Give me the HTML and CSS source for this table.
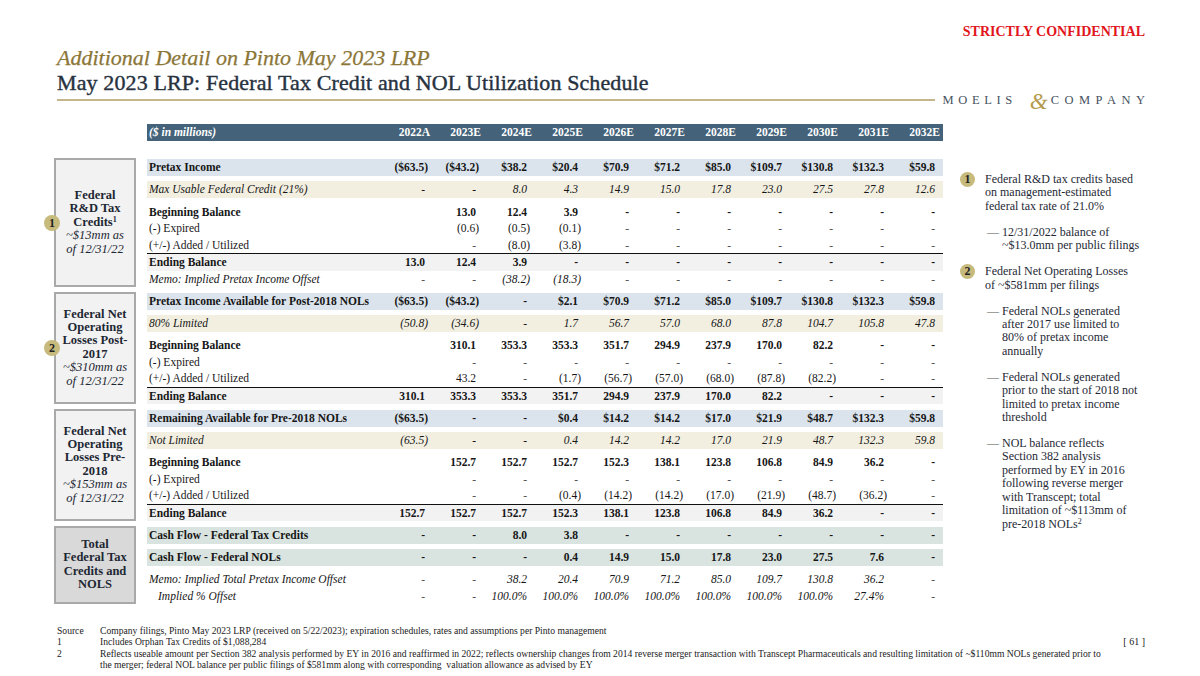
FILE: index.html
```html
<!DOCTYPE html>
<html lang="en">
<head>
<meta charset="utf-8">
<title>Federal Tax Credit and NOL Utilization Schedule</title>
<link rel="stylesheet" href="styles.css">
</head>
<body>
<div class="page">
  <div class="conf">STRICTLY CONFIDENTIAL</div>
  <div class="titles">
    <h1 class="t1">Additional Detail on Pinto May 2023 LRP</h1>
    <h2 class="t2">May 2023 LRP: Federal Tax Credit and NOL Utilization Schedule</h2>
  </div>
  <div class="rule-row">
    <div class="rule"></div>
    <div class="logo"><span class="lw first">MOELIS</span><span class="amp">&amp;</span><span class="lw last">COMPANY</span></div>
  </div>

  <div class="content">
    <div class="schedule">
      <div class="grid head"><span><i>($ in millions)</i></span><span>2022A</span><span>2023E</span><span>2024E</span><span>2025E</span><span>2026E</span><span>2027E</span><span>2028E</span><span>2029E</span><span>2030E</span><span>2031E</span><span>2032E</span></div>

      <!-- Section 1 -->
      <div class="sec sec1">
        <div class="box"><span class="badge">1</span><b>Federal</b><b>R&amp;D Tax</b><b>Credits<sup>1</sup></b><i>~$13mm as</i><i>of 12/31/22</i></div>
        <div class="rows">
          <div class="grid s blue"><span>Pretax Income</span><span class="ng">($63.5)</span><span class="ng">($43.2)</span><span>$38.2</span><span>$20.4</span><span>$70.9</span><span>$71.2</span><span>$85.0</span><span>$109.7</span><span>$130.8</span><span>$132.3</span><span>$59.8</span></div>
          <div class="grid s beige gap"><span>Max Usable Federal Credit (21%)</span><span>-</span><span>-</span><span>8.0</span><span>4.3</span><span>14.9</span><span>15.0</span><span>17.8</span><span>23.0</span><span>27.5</span><span>27.8</span><span>12.6</span></div>
          <div class="grid r bold"><span>Beginning Balance</span><span></span><span>13.0</span><span>12.4</span><span>3.9</span><span>-</span><span>-</span><span>-</span><span>-</span><span>-</span><span>-</span><span>-</span></div>
          <div class="grid r"><span>(-) Expired</span><span></span><span class="ng">(0.6)</span><span class="ng">(0.5)</span><span class="ng">(0.1)</span><span class="dim">-</span><span class="dim">-</span><span class="dim">-</span><span class="dim">-</span><span class="dim">-</span><span class="dim">-</span><span class="dim">-</span></div>
          <div class="grid r"><span>(+/-) Added / Utilized</span><span></span><span class="dim">-</span><span class="ng">(8.0)</span><span class="ng">(3.8)</span><span class="dim">-</span><span class="dim">-</span><span class="dim">-</span><span class="dim">-</span><span class="dim">-</span><span class="dim">-</span><span class="dim">-</span></div>
          <div class="grid end"><span>Ending Balance</span><span>13.0</span><span>12.4</span><span>3.9</span><span>-</span><span>-</span><span>-</span><span>-</span><span>-</span><span>-</span><span>-</span><span>-</span></div>
          <div class="grid r ital"><span>Memo: Implied Pretax Income Offset</span><span class="dim">-</span><span class="dim">-</span><span class="ng">(38.2)</span><span class="ng">(18.3)</span><span class="dim">-</span><span class="dim">-</span><span class="dim">-</span><span class="dim">-</span><span class="dim">-</span><span class="dim">-</span><span class="dim">-</span></div>
        </div>
      </div>

      <!-- Section 2 -->
      <div class="sec">
        <div class="box"><span class="badge">2</span><b>Federal Net</b><b>Operating</b><b>Losses Post-</b><b>2017</b><i>~$310mm as</i><i>of 12/31/22</i></div>
        <div class="rows">
          <div class="grid s blue"><span>Pretax Income Available for Post-2018 NOLs</span><span class="ng">($63.5)</span><span class="ng">($43.2)</span><span>-</span><span>$2.1</span><span>$70.9</span><span>$71.2</span><span>$85.0</span><span>$109.7</span><span>$130.8</span><span>$132.3</span><span>$59.8</span></div>
          <div class="grid s beige gap"><span>80% Limited</span><span class="ng">(50.8)</span><span class="ng">(34.6)</span><span>-</span><span>1.7</span><span>56.7</span><span>57.0</span><span>68.0</span><span>87.8</span><span>104.7</span><span>105.8</span><span>47.8</span></div>
          <div class="grid r bold"><span>Beginning Balance</span><span></span><span>310.1</span><span>353.3</span><span>353.3</span><span>351.7</span><span>294.9</span><span>237.9</span><span>170.0</span><span>82.2</span><span>-</span><span>-</span></div>
          <div class="grid r"><span>(-) Expired</span><span></span><span class="dim">-</span><span class="dim">-</span><span class="dim">-</span><span class="dim">-</span><span class="dim">-</span><span class="dim">-</span><span class="dim">-</span><span class="dim">-</span><span class="dim">-</span><span class="dim">-</span></div>
          <div class="grid r"><span>(+/-) Added / Utilized</span><span></span><span>43.2</span><span class="dim">-</span><span class="ng">(1.7)</span><span class="ng">(56.7)</span><span class="ng">(57.0)</span><span class="ng">(68.0)</span><span class="ng">(87.8)</span><span class="ng">(82.2)</span><span class="dim">-</span><span class="dim">-</span></div>
          <div class="grid end"><span>Ending Balance</span><span>310.1</span><span>353.3</span><span>353.3</span><span>351.7</span><span>294.9</span><span>237.9</span><span>170.0</span><span>82.2</span><span>-</span><span>-</span><span>-</span></div>
        </div>
      </div>

      <!-- Section 3 -->
      <div class="sec">
        <div class="box"><b>Federal Net</b><b>Operating</b><b>Losses Pre-</b><b>2018</b><i>~$153mm as</i><i>of 12/31/22</i></div>
        <div class="rows">
          <div class="grid s blue"><span>Remaining Available for Pre-2018 NOLs</span><span class="ng">($63.5)</span><span>-</span><span>-</span><span>$0.4</span><span>$14.2</span><span>$14.2</span><span>$17.0</span><span>$21.9</span><span>$48.7</span><span>$132.3</span><span>$59.8</span></div>
          <div class="grid s beige gap"><span>Not Limited</span><span class="ng">(63.5)</span><span>-</span><span>-</span><span>0.4</span><span>14.2</span><span>14.2</span><span>17.0</span><span>21.9</span><span>48.7</span><span>132.3</span><span>59.8</span></div>
          <div class="grid r bold"><span>Beginning Balance</span><span></span><span>152.7</span><span>152.7</span><span>152.7</span><span>152.3</span><span>138.1</span><span>123.8</span><span>106.8</span><span>84.9</span><span>36.2</span><span>-</span></div>
          <div class="grid r"><span>(-) Expired</span><span></span><span class="dim">-</span><span class="dim">-</span><span class="dim">-</span><span class="dim">-</span><span class="dim">-</span><span class="dim">-</span><span class="dim">-</span><span class="dim">-</span><span class="dim">-</span><span class="dim">-</span></div>
          <div class="grid r"><span>(+/-) Added / Utilized</span><span></span><span class="dim">-</span><span class="dim">-</span><span class="ng">(0.4)</span><span class="ng">(14.2)</span><span class="ng">(14.2)</span><span class="ng">(17.0)</span><span class="ng">(21.9)</span><span class="ng">(48.7)</span><span class="ng">(36.2)</span><span class="dim">-</span></div>
          <div class="grid end"><span>Ending Balance</span><span>152.7</span><span>152.7</span><span>152.7</span><span>152.3</span><span>138.1</span><span>123.8</span><span>106.8</span><span>84.9</span><span>36.2</span><span>-</span><span>-</span></div>
        </div>
      </div>

      <!-- Section 4 -->
      <div class="sec">
        <div class="box dark"><b>Total</b><b>Federal Tax</b><b>Credits and</b><b>NOLS</b></div>
        <div class="rows">
          <div class="grid s sage"><span>Cash Flow - Federal Tax Credits</span><span>-</span><span>-</span><span>8.0</span><span>3.8</span><span>-</span><span>-</span><span>-</span><span>-</span><span>-</span><span>-</span><span>-</span></div>
          <div class="grid s sage gap"><span>Cash Flow - Federal NOLs</span><span>-</span><span>-</span><span>-</span><span>0.4</span><span>14.9</span><span>15.0</span><span>17.8</span><span>23.0</span><span>27.5</span><span>7.6</span><span>-</span></div>
          <div class="grid r ital"><span>Memo: Implied Total Pretax Income Offset</span><span class="dim">-</span><span class="dim">-</span><span>38.2</span><span>20.4</span><span>70.9</span><span>71.2</span><span>85.0</span><span>109.7</span><span>130.8</span><span>36.2</span><span class="dim">-</span></div>
          <div class="grid r ital"><span class="ind">Implied % Offset</span><span class="dim">-</span><span class="dim">-</span><span>100.0%</span><span>100.0%</span><span>100.0%</span><span>100.0%</span><span>100.0%</span><span>100.0%</span><span>100.0%</span><span>27.4%</span><span class="dim">-</span></div>
        </div>
      </div>
    </div>

    <aside class="notes">
      <div class="note"><span class="nbadge">1</span><span>Federal R&amp;D tax credits based<br>on management-estimated<br>federal tax rate of 21.0%</span></div>
      <div class="sub"><span class="dash">—</span><span>12/31/2022 balance of<br>~$13.0mm per public filings</span></div>
      <div class="note"><span class="nbadge">2</span><span>Federal Net Operating Losses<br>of ~$581mm per filings</span></div>
      <div class="sub"><span class="dash">—</span><span>Federal NOLs generated<br>after 2017 use limited to<br>80% of pretax income<br>annually</span></div>
      <div class="sub"><span class="dash">—</span><span>Federal NOLs generated<br>prior to the start of 2018 not<br>limited to pretax income<br>threshold</span></div>
      <div class="sub"><span class="dash">—</span><span>NOL balance reflects<br>Section 382 analysis<br>performed by EY in 2016<br>following reverse merger<br>with Transcept; total<br>limitation of ~$113mm of<br>pre-2018 NOLs<sup>2</sup></span></div>
    </aside>
  </div>

  <footer class="foot">
    <span class="fl r1">Source</span>
    <span class="ft r1">Company filings, Pinto May 2023 LRP (received on 5/22/2023); expiration schedules, rates and assumptions per Pinto management</span>
    <span class="fl r2">1</span>
    <span class="ft r2">Includes Orphan Tax Credits of $1,088,284</span>
    <span class="pg">[ 61 ]</span>
    <span class="fl r3">2</span>
    <span class="ft r3">Reflects useable amount per Section 382 analysis performed by EY in 2016 and reaffirmed in 2022; reflects ownership changes from 2014 reverse merger transaction with Transcept Pharmaceuticals and resulting limitation of ~$110mm NOLs generated prior to<br>the merger; federal NOL balance per public filings of $581mm along with corresponding&nbsp; valuation allowance as advised by EY</span>
  </footer>
</div>
</body>
</html>
```

FILE: styles.css
```css
* { box-sizing: border-box; }
html, body { margin: 0; padding: 0; background: #fff; }
body {
  width: 1200px;
  height: 676px;
  overflow: hidden;
  font-family: "Liberation Serif", "Times New Roman", serif;
  color: #161616;
}
.page { padding-top: 24px; }

.conf {
  text-align: right;
  padding-right: 55px;
  font-size: 14px;
  line-height: 16px;
  font-weight: bold;
  color: #e2141c;
}
.titles { padding-left: 57px; }
.t1 {
  margin: 5px 0 0;
  font-size: 22px;
  line-height: 25px;
  font-weight: normal;
  font-style: italic;
  color: #8b7637;
  -webkit-text-stroke: 0.25px #8b7637;
}
.t2 {
  margin: 0;
  font-size: 22px;
  line-height: 25px;
  font-weight: normal;
  letter-spacing: 0.12px;
  color: #27323f;
  -webkit-text-stroke: 0.4px #27323f;
}
.rule-row {
  display: flex;
  align-items: center;
  height: 10px;
  padding: 0 55px 0 57px;
}
.rule { flex: 1; height: 1.5px; background: #c4b68b; }
.logo {
  margin-left: 8px;
  display: flex;
  align-items: center;
  font-size: 12.5px;
  color: #46525e;
  white-space: nowrap;
}
.lw { letter-spacing: 5.5px; }
.lw.first { letter-spacing: 4.6px; }
.lw.last { margin-right: -5.5px; }
.amp {
  font-style: italic;
  color: #b39a4e;
  font-size: 23px;
  line-height: 10px;
  margin: 0 3px 0 13px;
  position: relative;
  top: 2px;
}

.content { display: flex; margin-top: 19px; padding-left: 54px; }
.schedule { width: 889px; }

.grid {
  display: grid;
  grid-template-columns: 232px repeat(11, 51px);
  padding-right: 3px;
  width: 796px;
}
.grid > span { text-align: right; padding-right: 5px; white-space: nowrap; }
.grid > span:first-child { text-align: left; padding-left: 2px; padding-right: 0; }
.grid > span.ng { padding-right: 2px; }
.grid > span.ind { padding-left: 11px; }
.dim { color: #555; }

.head {
  margin-left: 93px;
  height: 17px;
  line-height: 17px;
  background: #44637a;
  color: #fff;
  font-weight: bold;
  font-size: 11.5px;
}
.head > span { padding-right: 0; }

.sec {
  display: grid;
  grid-template-columns: 82px 796px;
  column-gap: 11px;
  margin-top: 4.5px;
}
.sec1 { margin-top: 17px; }

.box {
  position: relative;
  border: 2px solid #a9a9a9;
  background: #f2f2f2;
  display: flex;
  flex-direction: column;
  justify-content: center;
  align-items: center;
  text-align: center;
  font-size: 12.5px;
  line-height: 13.4px;
  color: #1d2733;
}
.box.dark { background: #d9d9d9; }
.box sup, .notes sup { font-size: 8px; line-height: 0; vertical-align: 4px; }
.badge, .nbadge {
  width: 16px;
  height: 16px;
  border-radius: 50%;
  background: #c6ba7c;
  font-weight: bold;
  font-size: 12px;
  line-height: 16px;
  text-align: center;
  color: #222;
  font-style: normal;
}
.badge { position: absolute; left: -12px; top: 50%; margin-top: -8px; }

.rows { padding-top: 1px; font-size: 11.5px; }
.r { height: 16.5px; line-height: 16.5px; }
.s { height: 17px; line-height: 17px; margin-bottom: 5px; }
.s.gap { margin-bottom: 5.5px; }
.blue { background: #dbe4ec; font-weight: bold; }
.beige { background: #f2efe1; font-style: italic; }
.sage { background: #d9e4e0; font-weight: bold; }
.bold { font-weight: bold; }
.ital { font-style: italic; }
.end {
  height: 17.5px;
  line-height: 16px;
  border-top: 1.5px solid #111;
  background: #f2f2f2;
  font-weight: bold;
}

.notes {
  margin-left: 17px;
  padding-top: 49px;
  font-size: 12px;
  line-height: 13.4px;
  color: #1e2935;
  white-space: nowrap;
}
.note { display: flex; margin-top: 12.6px; }
.note:first-child { margin-top: 0; }
.nbadge { flex: none; width: 15px; height: 15px; line-height: 15px; margin: -1px 10px 0 0; }
.sub { display: flex; padding-left: 27px; margin-top: 12.6px; }
.dash { flex: none; width: 15px; color: #555; }

.foot {
  display: grid;
  grid-template-columns: 43px 1010px 1fr;
  margin-top: 21px;
  padding: 0 55px 0 57px;
  font-size: 9.6px;
  line-height: 11.3px;
  color: #222;
}
.fl { grid-column: 1; }
.ft { grid-column: 2; white-space: nowrap; }
.r1 { grid-row: 1; }
.r2 { grid-row: 2; }
.r3 { grid-row: 3; }
.pg { grid-column: 3; grid-row: 2; text-align: right; font-size: 10px; }
```
